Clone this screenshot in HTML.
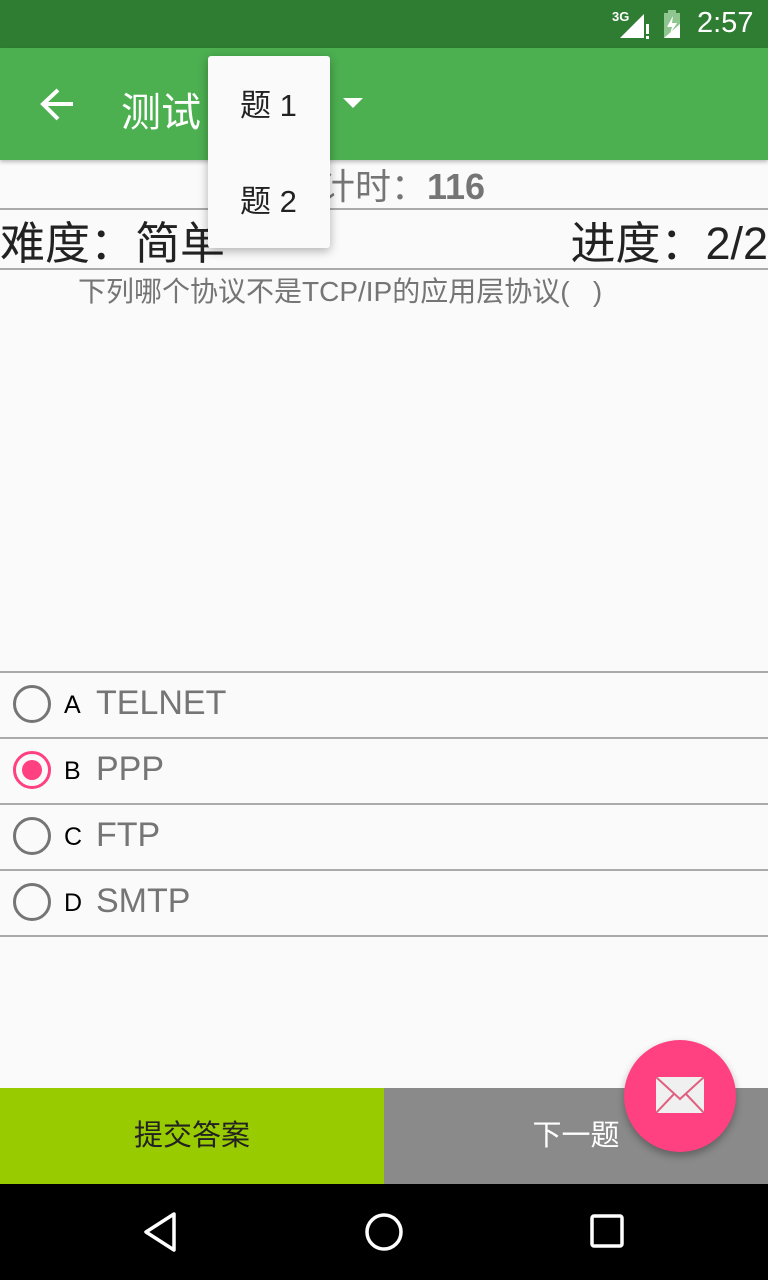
<!DOCTYPE html>
<html><head><meta charset="utf-8"><style>
*{margin:0;padding:0;box-sizing:border-box}
body{width:768px;height:1280px;overflow:hidden;background:#fafafa;font-family:"Liberation Sans","Noto Sans CJK SC",sans-serif;position:relative}
.abs{position:absolute}
.line{position:absolute;left:0;width:768px;height:2px;background:#aaa}
.opt{position:absolute;left:0;width:768px;height:64px}
.opt .r{position:absolute;left:13px;top:12px;width:38px;height:38px;border:3px solid #757575;border-radius:50%}
.opt .l{position:absolute;left:64px;top:18px;font-size:25px;color:#000}
.opt .t{position:absolute;left:96px;top:11px;font-size:34px;color:#757575}
</style></head><body>
<div class="abs" style="left:0;top:0;width:768px;height:48px;background:#2e7d32"></div>
<div class="abs" style="left:612px;top:9px;color:#fff;font-size:13px;font-weight:bold">3G</div>
<svg class="abs" style="left:618px;top:12px" width="34" height="28"><polygon points="2,26 26,26 26,2" fill="#fff"/><rect x="28" y="12" width="3" height="10" fill="#fff"/><rect x="28" y="24" width="3" height="3" fill="#fff"/></svg>
<svg class="abs" style="left:662px;top:10px" width="22" height="30"><rect x="6" y="0" width="8" height="3" fill="#8fc58f"/><rect x="2" y="3" width="16" height="25" fill="#8fc58f"/><polygon points="2,28 18,28 18,14" fill="#fff"/><polygon points="11,6 5,17 10,17 8,24 15,13 10,13" fill="#fff"/></svg>
<div class="abs" style="left:697px;top:7px;color:#fff;font-size:29px">2:57</div>
<div class="abs" style="left:0;top:48px;width:768px;height:112px;background:#4caf50;box-shadow:0 2px 4px rgba(0,0,0,.25)"></div>
<svg class="abs" style="left:38px;top:86px" width="38" height="38"><path d="M35 18H6M20 4L5 18l15 15" stroke="#fff" stroke-width="4" fill="none"/></svg>
<div class="abs" style="left:121px;top:80px;color:#fff;font-size:40px">测试</div>
<svg class="abs" style="left:343px;top:98px" width="20" height="12"><polygon points="0,0 20,0 10,10" fill="#fff"/></svg>
<div class="abs" style="left:0;top:158px;width:768px;text-align:center;color:#757575;font-size:36px;padding-left:36px">计时：<b>116</b></div>
<div class="line" style="top:208px"></div>
<div class="abs" style="left:0;top:207px;font-size:45px;color:#222">难度：简单</div>
<div class="abs" style="right:0;top:207px;font-size:45px;color:#222">进度：2/2</div>
<div class="line" style="top:268px"></div>
<div class="abs" style="left:78px;top:270px;font-size:28px;color:#757575">下列哪个协议不是TCP/IP的应用层协议(&nbsp;&nbsp;&nbsp;)</div>
<div class="line" style="top:671px"></div>
<div class="opt" style="top:673px"><div class="r"></div><div class="l">A</div><div class="t">TELNET</div></div>
<div class="line" style="top:737px"></div>
<div class="opt" style="top:739px"><div class="r" style="border-color:#ff4081"><div style="position:absolute;left:6px;top:6px;width:20px;height:20px;border-radius:50%;background:#ff4081"></div></div><div class="l">B</div><div class="t">PPP</div></div>
<div class="line" style="top:803px"></div>
<div class="opt" style="top:805px"><div class="r"></div><div class="l">C</div><div class="t">FTP</div></div>
<div class="line" style="top:869px"></div>
<div class="opt" style="top:871px"><div class="r"></div><div class="l">D</div><div class="t">SMTP</div></div>
<div class="line" style="top:935px"></div>
<div class="abs" style="left:0;top:1088px;width:384px;height:96px;background:#99cc00;color:#222;font-size:29px;text-align:center;line-height:96px">提交答案</div>
<div class="abs" style="left:384px;top:1088px;width:384px;height:96px;background:#8a8a8a;color:#fff;font-size:29px;text-align:center;line-height:96px">下一题</div>
<div class="abs" style="left:624px;top:1040px;width:112px;height:112px;border-radius:50%;background:#ff4081;box-shadow:0 4px 8px rgba(0,0,0,.3)"></div>
<svg class="abs" style="left:656px;top:1077px" width="48" height="36"><rect x="0" y="0" width="48" height="36" fill="#f0f0f0"/><path d="M0 0L24 22L48 0M0 36L18 17M48 36L30 17" stroke="#e06080" stroke-width="2" fill="none"/></svg>
<div class="abs" style="left:0;top:1184px;width:768px;height:96px;background:#000"></div>
<svg class="abs" style="left:140px;top:1210px" width="40" height="44"><path d="M34 4L6 22L34 40Z" stroke="#fff" stroke-width="3.5" fill="none" stroke-linejoin="round"/></svg>
<svg class="abs" style="left:362px;top:1210px" width="44" height="44"><circle cx="22" cy="22" r="17" stroke="#fff" stroke-width="3.5" fill="none"/></svg>
<svg class="abs" style="left:588px;top:1212px" width="40" height="40"><rect x="4" y="4" width="30" height="30" rx="2" stroke="#fff" stroke-width="3.5" fill="none"/></svg>
<div class="abs" style="left:208px;top:56px;width:122px;height:192px;background:#fafafa;border-radius:3px;box-shadow:0 3px 10px rgba(0,0,0,.3)">
<div class="abs" style="left:32px;top:24px;font-size:31px;color:#222">题 1</div>
<div class="abs" style="left:32px;top:120px;font-size:31px;color:#222">题 2</div>
</div>
</body></html>
